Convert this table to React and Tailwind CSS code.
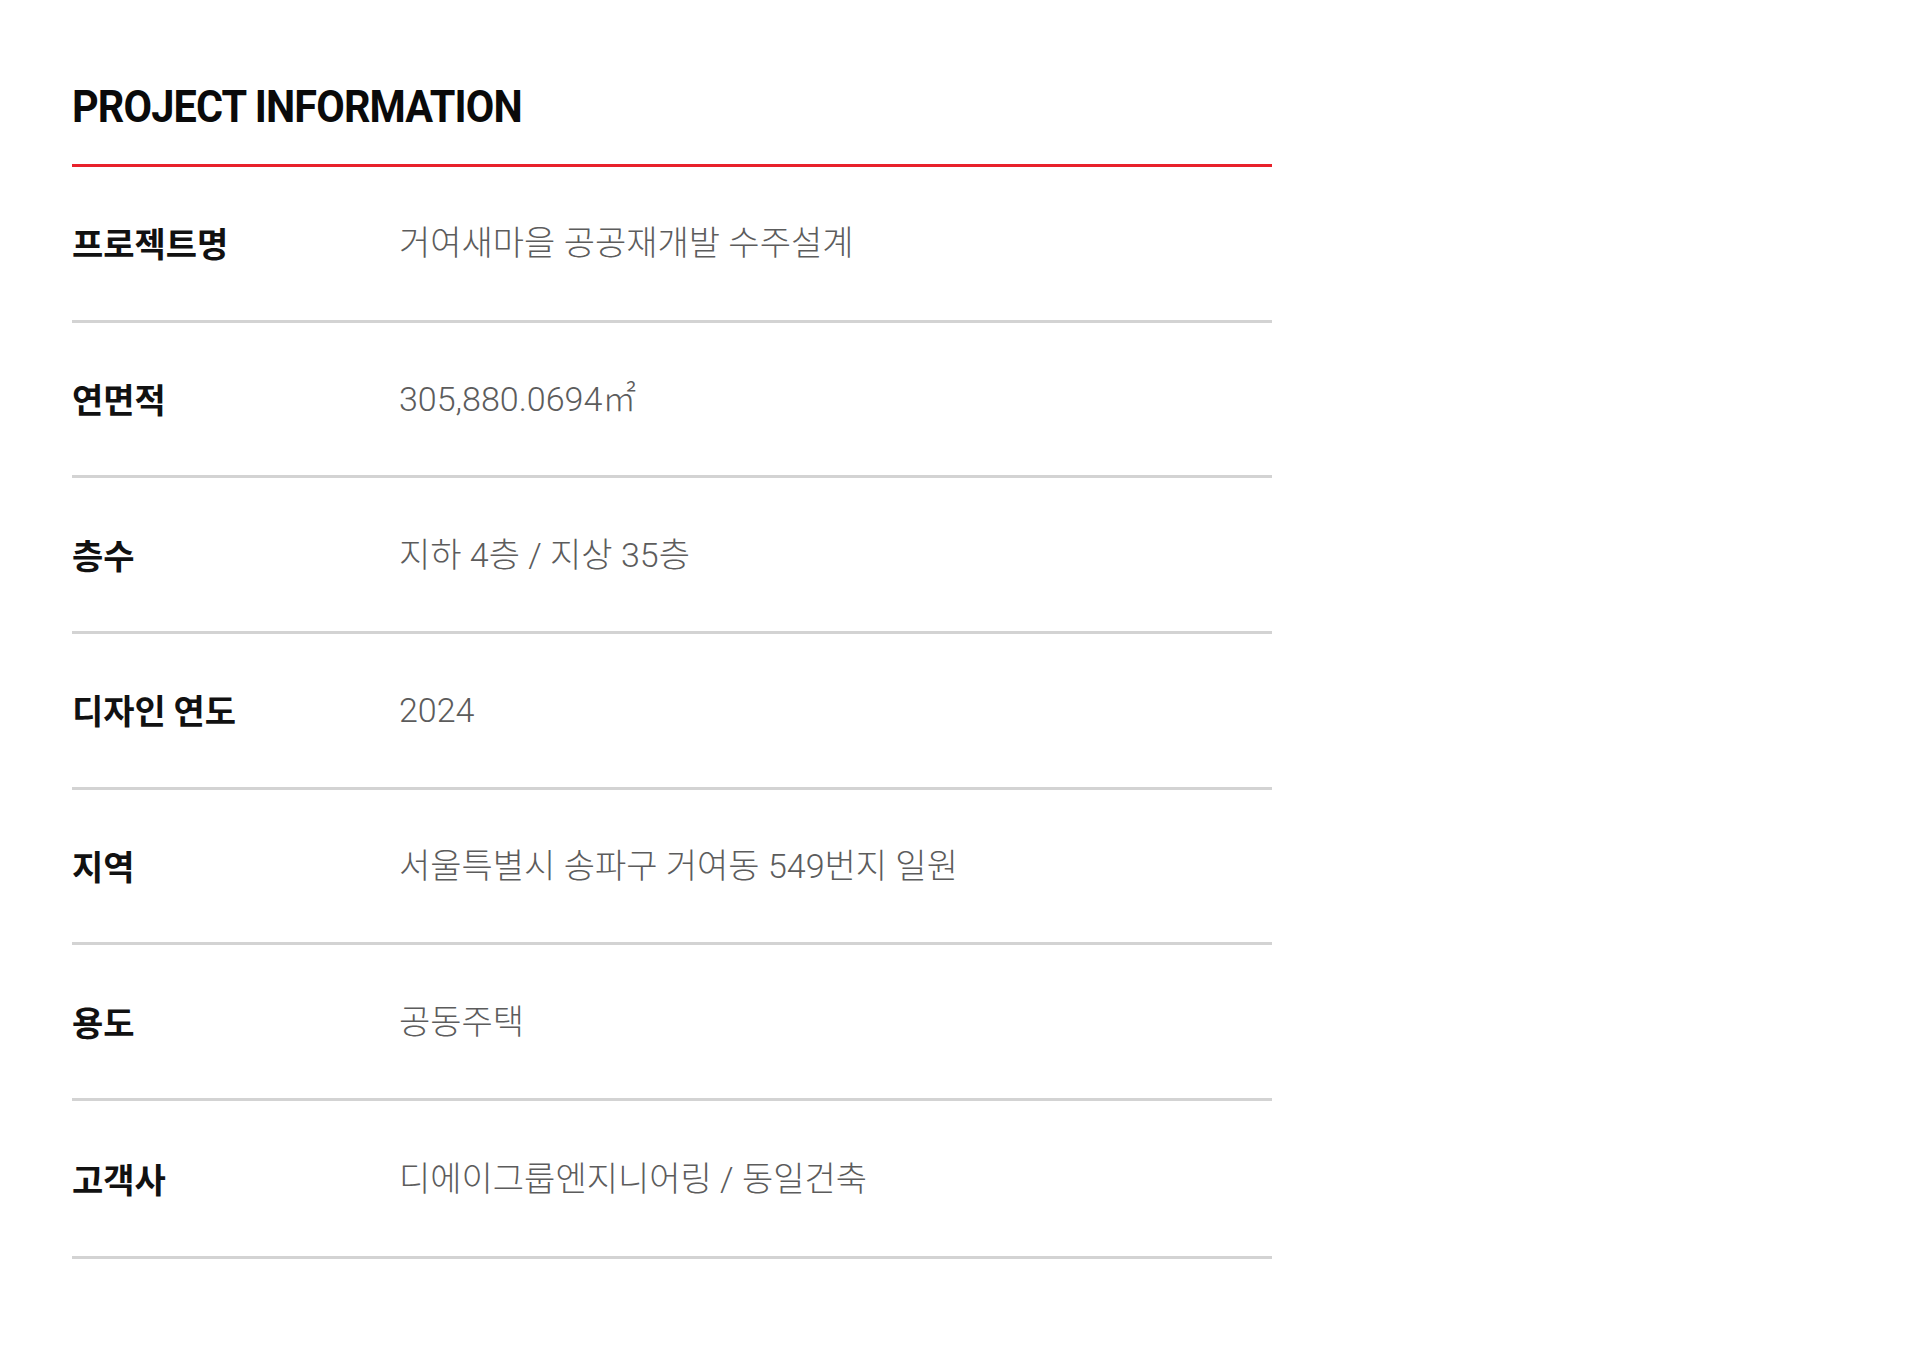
import React from "react";

const rows = [
  { label: "프로젝트명", value: "거여새마을 공공재개발 수주설계" },
  { label: "연면적", value: "305,880.0694㎡" },
  { label: "층수", value: "지하 4층 / 지상 35층" },
  { label: "디자인 연도", value: "2024" },
  { label: "지역", value: "서울특별시 송파구 거여동 549번지 일원" },
  { label: "용도", value: "공동주택" },
  { label: "고객사", value: "디에이그룹엔지니어링 / 동일건축", last: true },
];

export default function App() {
  return (
    <div className="min-h-[1357px] w-[1920px] bg-white">
      <div className="ml-[72px] w-[1200px] pt-[85px]">
        <h2
          className="origin-left scale-x-[0.94] text-[44px] font-bold leading-none tracking-[-0.02em] text-[#0a0a0a]"
          style={{ fontFamily: "Roboto, 'Noto Sans CJK KR', sans-serif" }}
        >
          PROJECT INFORMATION
        </h2>
        <div className="mt-[35px] h-[3px] bg-[#e8212b]" />
        {rows.map((r) => (
          <div
            key={r.label}
            className={
              "flex items-center border-b-[3px] border-[#d3d3d3] " +
              (r.last ? "h-[158px]" : "h-[155.7px]")
            }
          >
            <div
              className="w-[327px] shrink-0 text-[34px] font-bold leading-none text-[#111]"
              style={{ fontFamily: "'Noto Sans CJK KR', sans-serif" }}
            >
              {r.label}
            </div>
            <div
              className="text-[34px] font-light leading-none text-[#5c5c5c]"
              style={{ fontFamily: "Roboto, 'Noto Sans CJK KR', sans-serif" }}
            >
              {r.value}
            </div>
          </div>
        ))}
      </div>
    </div>
  );
}
